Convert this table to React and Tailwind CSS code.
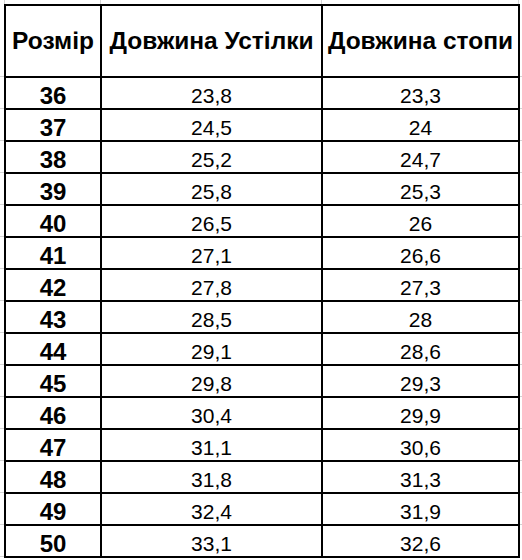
import React from 'react';

const rows = [
  ['36', '23,8', '23,3'],
  ['37', '24,5', '24'],
  ['38', '25,2', '24,7'],
  ['39', '25,8', '25,3'],
  ['40', '26,5', '26'],
  ['41', '27,1', '26,6'],
  ['42', '27,8', '27,3'],
  ['43', '28,5', '28'],
  ['44', '29,1', '28,6'],
  ['45', '29,8', '29,3'],
  ['46', '30,4', '29,9'],
  ['47', '31,1', '30,6'],
  ['48', '31,8', '31,3'],
  ['49', '32,4', '31,9'],
  ['50', '33,1', '32,6'],
];

const SizeTable = () => {
  return (
    <div className="flex flex-col bg-white text-black font-['Liberation_Sans',Arial,sans-serif]">
      {/* sheet grid ticks above the table */}
      <div className="flex h-[4px]">
        <div className="w-[4px]" />
        <div className="w-[96px] border-l border-[#d4d4d4]" />
        <div className="w-[221px] border-l border-[#d4d4d4]" />
        <div className="w-[197px] border-l border-[#d4d4d4]" />
        <div className="w-[4px] border-l border-[#d4d4d4]" />
      </div>

      <div className="flex">
        {/* sheet grid ticks left of the table */}
        <div className="flex flex-col w-[4px]">
          <div className="h-[72px]" />
          {rows.map((r) => (
            <div key={r[0]} className="h-[32px] border-t border-[#d4d4d4]" />
          ))}
          <div className="h-[2px] border-t border-[#d4d4d4]" />
        </div>

        {/* Table */}
        <div className="w-[516px] border-2 border-black">
          <div className="grid grid-cols-[94px_221px_197px] h-[70px] text-[24.5px] font-bold">
            <div className="flex items-center justify-center">Розмір</div>
            <div className="flex items-center justify-center border-l-2 border-black whitespace-nowrap">
              Довжина Устілки
            </div>
            <div className="flex items-center justify-center border-l-2 border-black whitespace-nowrap">
              Довжина стопи
            </div>
          </div>

          {rows.map(([size, insole, foot]) => (
            <div
              key={size}
              className="grid grid-cols-[94px_221px_197px] h-[32px] border-t-2 border-black"
            >
              <div className="flex items-center justify-center text-[24px] font-bold">{size}</div>
              <div className="flex items-center justify-center border-l-2 border-black text-[21px]">
                {insole}
              </div>
              <div className="flex items-center justify-center border-l-2 border-black text-[21px]">
                {foot}
              </div>
            </div>
          ))}
        </div>

        <div className="flex flex-col w-[2px]">
          <div className="h-[72px]" />
          {rows.map((r) => (
            <div key={r[0]} className="h-[32px] border-t border-[#d4d4d4]" />
          ))}
        </div>
      </div>
    </div>
  );
};

export default function App() {
  return <SizeTable />;
}
